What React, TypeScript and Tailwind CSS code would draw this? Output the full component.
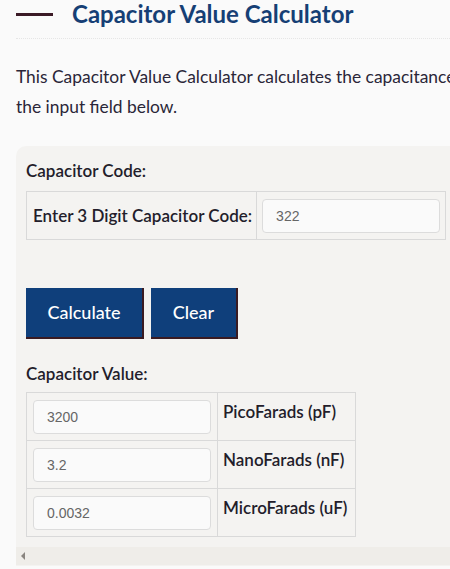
import React from "react";

const inputCls =
  "w-[178px] h-[34px] rounded-[4px] border border-[#dcdcdc] bg-[#fafafa] px-[13px] text-[14px] text-[#666] outline-none font-['Liberation_Sans',Arial,sans-serif]";

export default function App() {
  const rows = [
    ["3200", "PicoFarads (pF)"],
    ["3.2", "NanoFarads (nF)"],
    ["0.0032", "MicroFarads (uF)"],
  ];
  return (
    <div
      className="w-[450px] h-[569px] overflow-hidden bg-[#fafafa] text-[#2a2333]"
      style={{ fontFamily: "Lato, 'Open Sans', sans-serif" }}
    >
      <div className="pl-[16px] whitespace-nowrap">
        <div className="flex items-center h-[28px] border-b border-dotted border-[#e6e6e6] pb-[10px] box-content">
          <div className="w-[37px] h-[3px] bg-[#3b1a26]" />
          <h1 className="ml-[19px] text-[24px] leading-[28px] font-bold text-[#163f75]">
            Capacitor Value Calculator
          </h1>
        </div>
        <p className="mt-[23px] text-[17.4px] leading-[30px] text-[#2a2638]">
          This Capacitor Value Calculator calculates the capacitance value of a capacitor based on
          <br />
          the input field below.
        </p>
        <div className="mt-[24px] rounded-tl-[10px] bg-[#f4f3f1] pl-[10px] pt-[13px] h-[420px]">
          <div className="text-[17px] font-semibold leading-[24px] text-[#231d2b]">Capacitor Code:</div>
          <table className="mt-[8px] border-collapse">
            <tbody>
              <tr className="h-[48px]">
                <td className="border border-[#d9d9d9] w-[230px] pl-[6px] pr-[4px] text-[17px] font-semibold text-[#231d2b]">
                  Enter 3 Digit Capacitor Code:
                </td>
                <td className="border border-[#d9d9d9] w-[189px] px-[5px]">
                  <input className={inputCls} defaultValue="322" readOnly />
                </td>
              </tr>
            </tbody>
          </table>
          <div className="mt-[48px] flex gap-[7px]">
            <button className="w-[118px] h-[51px] bg-[#0f3f7b] border-r-[2px] border-b-[2px] border-[#3a1b22] text-white text-[18px] font-medium">
              Calculate
            </button>
            <button className="w-[87px] h-[51px] bg-[#0f3f7b] border-r-[2px] border-b-[2px] border-[#3a1b22] text-white text-[18px] font-medium">
              Clear
            </button>
          </div>
          <div className="mt-[23px] text-[17px] font-semibold leading-[24px] text-[#231d2b]">Capacitor Value:</div>
          <table className="mt-[6px] border-collapse">
            <tbody>
              {rows.map(([v, l]) => (
                <tr key={l} className="h-[48px]">
                  <td className="border border-[#d9d9d9] w-[190px] px-[6px]">
                    <input className={inputCls} defaultValue={v} readOnly />
                  </td>
                  <td className="border border-[#d9d9d9] w-[138px] pl-[5px] pr-[4px] pt-[7px] align-top text-[17px] leading-[24px] font-semibold text-[#231d2b]">
                    {l}
                  </td>
                </tr>
              ))}
            </tbody>
          </table>
          <div className="mt-[10px] -ml-[10px] h-[18px] bg-[#efede9] flex items-center pl-[4px]">
            <svg width="6" height="8" viewBox="0 0 6 8">
              <path d="M5 0 L1 4 L5 8 Z" fill="#8a8580" />
            </svg>
          </div>
        </div>
      </div>
    </div>
  );
}
